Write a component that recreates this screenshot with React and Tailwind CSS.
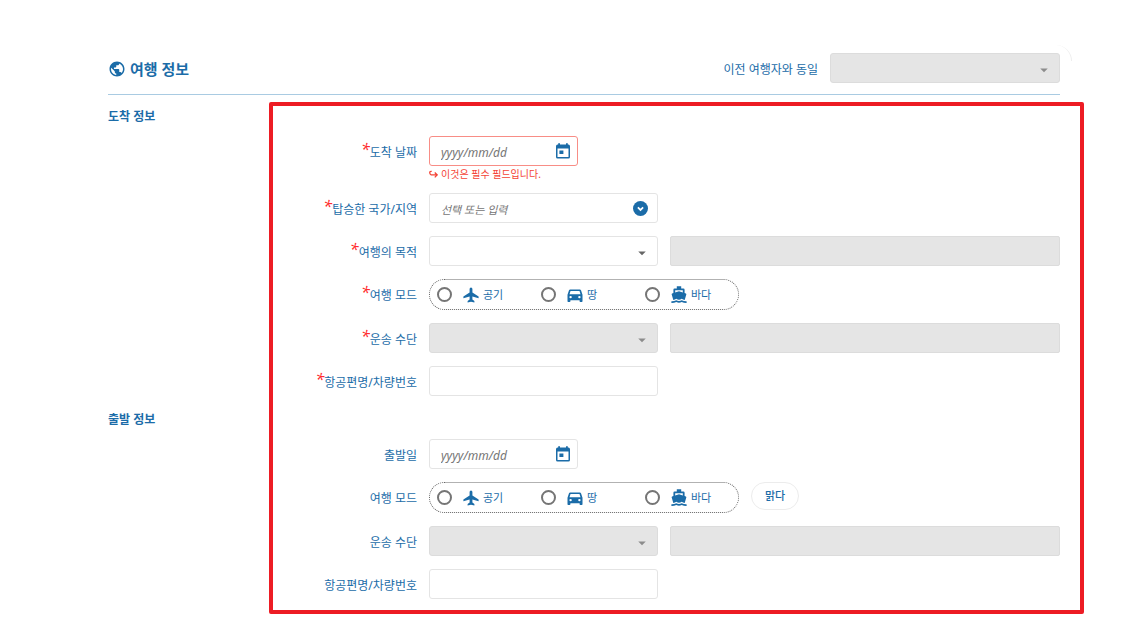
import React from 'react';
import { MdPublic, MdArrowDropDown } from 'react-icons/md';

function PlaneIcon({ className }) {
  return (
    <svg viewBox="0 0 16 16" className={className} fill="currentColor" aria-hidden="true">
      <path d="M8 .4Q9.4.4 9.4 2V5.6L15.6 9.4V11.3L9.4 9.6V12.6L11.4 14.1V15.6L8 14.7L4.6 15.6V14.1L6.6 12.6V9.6L.4 11.3V9.4L6.6 5.6V2Q6.6.4 8 .4Z" />
    </svg>
  );
}

function CarIcon({ className }) {
  return (
    <svg viewBox="0 0 16 16" className={className} fill="currentColor" fillRule="evenodd" aria-hidden="true">
      <path d="M3.2 2.5H12.8Q13.7 2.5 14 3.3L15.5 7.8V14.2Q15.5 15 14.8 15H13.4Q12.6 15 12.6 14.2V13.2H3.4V14.2Q3.4 15 2.6 15H1.2Q.5 15 .5 14.2V7.8L2 3.3Q2.3 2.5 3.2 2.5ZM3.5 4L2.5 7.2H13.5L12.5 4ZM3.6 8.9A1.2 1.2 0 1 0 3.6 11.3A1.2 1.2 0 1 0 3.6 8.9ZM12.4 8.9A1.2 1.2 0 1 0 12.4 11.3A1.2 1.2 0 1 0 12.4 8.9Z" />
    </svg>
  );
}

function BoatIcon({ className }) {
  return (
    <svg viewBox="0 0 16 18" className={className} fill="currentColor" fillRule="evenodd" aria-hidden="true">
      <path d="M5.8 .2H10.2V2.5H12.4Q13.6 2.5 13.6 3.7V7L14.9 7.4Q15.6 7.7 15.3 8.4L13.7 13.9Q12 13.8 10.7 12.7Q8 14.7 5.3 12.7Q4 13.8 2.3 13.9L.7 8.4Q.4 7.7 1.1 7.4L2.4 7V3.7Q2.4 2.5 3.6 2.5H5.8ZM4.2 4.3V6.4L8 5.2L11.8 6.4V4.3Z" />
      <path d="M.4 15.3Q3 15.4 5.3 14.3Q8 15.8 10.7 14.3Q13 15.4 15.6 15.3V17Q13 17.1 10.7 16.1Q8 17.6 5.3 16.1Q3 17.1 .4 17Z" />
    </svg>
  );
}

function CalendarIcon({ className }) {
  return (
    <svg viewBox="0 0 16 16" className={className} fill="currentColor" fillRule="evenodd" aria-hidden="true">
      <path d="M3.2.2H5V1.6H11V.2H12.8V1.6H13.4Q15 1.6 15 3.2V14Q15 15.6 13.4 15.6H2.6Q1 15.6 1 14V3.2Q1 1.6 2.6 1.6H3.2ZM2.5 5.6V14.1H13.5V5.6ZM4.4 7.4H8.4V11H4.4Z" />
    </svg>
  );
}

function Row({ label, htmlFor, required, group, children }) {
  const text = (
    <>
      {required && (
        <span aria-hidden="true" className="mb-2 text-base leading-4 text-[#ff2d2d] italic">*</span>
      )}
      <span>{label}</span>
    </>
  );
  const style = 'flex h-[30px] w-[148px] shrink-0 items-center justify-end pt-[3px] text-xs text-[#1b6ca8]';
  return (
    <div className="flex items-start gap-3">
      {group ? (
        <span id={htmlFor} className={style}>{text}</span>
      ) : (
        <label htmlFor={htmlFor} className={style}>{text}</label>
      )}
      {children}
    </div>
  );
}

function Dropdown({ id, disabled, wide }) {
  return (
    <div className={wide ? 'relative w-[230px]' : 'relative w-[229px] shrink-0'}>
      <select
        id={id}
        disabled={disabled}
        className="block h-[30px] w-full appearance-none rounded-[3px] border border-[#e4e4e4] bg-white px-3 text-xs disabled:border-[#dcdcdc] disabled:bg-[#e5e5e5] disabled:opacity-100"
      />
      <MdArrowDropDown
        className={`pointer-events-none absolute top-2 right-[7px] size-[18px] ${disabled ? 'text-[#8c8c8c]' : 'text-[#666666]'}`}
      />
    </div>
  );
}

function DateField({ id, error }) {
  return (
    <div>
      <div
        className={`flex h-[30px] w-[149px] items-center rounded-[3px] border pr-[6px] pl-[11px] ${error ? 'border-[#f88d86]' : 'border-[#e4e4e4]'}`}
      >
        <input
          id={id}
          placeholder="yyyy/mm/dd"
          className="mt-1 min-w-0 flex-1 text-xs italic outline-none placeholder:text-[#757575]"
        />
        <button type="button" aria-label="달력" className="text-[#1b6ca8]">
          <CalendarIcon className="size-4" />
        </button>
      </div>
      {error && (
        <p className="flex h-[14px] items-center gap-[3px] pt-[3px] text-[10px] text-[#f44336]">
          <svg viewBox="0 0 10 10" className="size-[9px]" fill="none" stroke="currentColor" strokeWidth="1.4">
            <path d="M3 1.5H2.2Q.8 1.5 .8 3T2.5 5.5H9M6.4 2.8L9.1 5.5L6.4 8.2" />
          </svg>
          {error}
        </p>
      )}
    </div>
  );
}

const modes = [
  { value: 'air', text: '공기', Icon: PlaneIcon },
  { value: 'land', text: '땅', Icon: CarIcon },
  { value: 'sea', text: '바다', Icon: BoatIcon },
];

function ModeGroup({ name, labelId }) {
  return (
    <div
      role="radiogroup"
      aria-labelledby={labelId}
      className="flex h-[31px] w-[310px] shrink-0 items-center rounded-full border border-dotted border-[#666666] pl-[7px]"
    >
      {modes.map(({ value, text, Icon }) => (
        <label key={value} className="flex w-[104px] shrink-0 items-center text-[11px] text-[#1b6ca8] last:w-auto">
          <input
            type="radio"
            name={name}
            value={value}
            className="size-[15px] appearance-none rounded-full border-2 border-[#757575] checked:bg-[#1b6ca8]"
          />
          <Icon className="ml-[11px] h-[18px] w-4" />
          <span className="ml-1 pt-[2px]">{text}</span>
        </label>
      ))}
    </div>
  );
}

function DisabledField({ label }) {
  return (
    <input
      disabled
      aria-label={label}
      className="h-[30px] min-w-0 flex-1 rounded-xs border border-[#dcdcdc] bg-[#e5e5e5] px-3 text-xs"
    />
  );
}

function TextField({ id }) {
  return (
    <input id={id} className="h-[30px] w-[229px] rounded-[3px] border border-[#e4e4e4] px-3 text-xs outline-none" />
  );
}

export default function App() {
  return (
    <main className="pt-[53px] pr-[71px] pb-8 pl-[108px] font-['Noto_Sans','Noto_Sans_CJK_KR',sans-serif] text-[#1b6ca8]">
      <header className="relative flex items-center justify-between border-b border-[#a9cbe2] pb-[11px]">
        <h1 className="flex items-center gap-1 pt-[2px] text-[15px] font-bold">
          <MdPublic className="size-[18px]" />
          여행 정보
        </h1>
        <div className="flex items-center gap-3">
          <label htmlFor="previous" className="pt-[3px] text-xs">이전 여행자와 동일</label>
          <Dropdown id="previous" disabled wide />
        </div>
        <div className="absolute -top-2 -right-3 size-4 rounded-tr-full border-r border-[#eeeeee]" />
      </header>

      <form className="relative">
        <section className="flex pt-3">
          <h2 className="w-[161px] shrink-0 text-xs leading-5 font-bold">도착 정보</h2>
          <div className="flex min-w-0 flex-1 flex-col gap-[13px] pt-[29px]">
            <Row label="도착 날짜" htmlFor="arrival-date" required>
              <DateField id="arrival-date" error="이것은 필수 필드입니다." />
            </Row>
            <Row label="탑승한 국가/지역" htmlFor="country" required>
              <div className="flex h-[30px] w-[229px] items-center rounded-[3px] border border-[#e4e4e4] pr-[9px] pl-[11px]">
                <input
                  id="country"
                  placeholder="선택 또는 입력"
                  className="mt-1 min-w-0 flex-1 text-[11px] italic outline-none placeholder:text-[#757575]"
                />
                <button type="button" aria-label="목록 열기">
                  <svg viewBox="0 0 16 16" className="size-[15px]">
                    <circle cx="8" cy="8" r="8" fill="#1b6ca8" />
                    <path d="M5.2 6.8L8 9.5L10.8 6.8" fill="none" stroke="white" strokeWidth="1.9" />
                  </svg>
                </button>
              </div>
            </Row>
            <Row label="여행의 목적" htmlFor="purpose" required>
              <Dropdown id="purpose" />
              <DisabledField label="기타 목적" />
            </Row>
            <Row label="여행 모드" htmlFor="arrival-mode" required group>
              <ModeGroup name="arrival" labelId="arrival-mode" />
            </Row>
            <Row label="운송 수단" htmlFor="arrival-transport" required>
              <Dropdown id="arrival-transport" disabled />
              <DisabledField label="기타 운송 수단" />
            </Row>
            <Row label="항공편명/차량번호" htmlFor="arrival-number" required>
              <TextField id="arrival-number" />
            </Row>
          </div>
        </section>

        <section className="flex pt-[14px]">
          <h2 className="w-[161px] shrink-0 text-xs leading-5 font-bold">출발 정보</h2>
          <div className="flex min-w-0 flex-1 flex-col gap-[13px] pt-[29px]">
            <Row label="출발일" htmlFor="departure-date">
              <DateField id="departure-date" />
            </Row>
            <Row label="여행 모드" htmlFor="departure-mode" group>
              <ModeGroup name="departure" labelId="departure-mode" />
              <button type="button" className="h-7 w-12 rounded-full border border-[#ececec] text-[11px] font-medium">
                맑다
              </button>
            </Row>
            <Row label="운송 수단" htmlFor="departure-transport">
              <Dropdown id="departure-transport" disabled />
              <DisabledField label="기타 출발 운송 수단" />
            </Row>
            <Row label="항공편명/차량번호" htmlFor="departure-number">
              <TextField id="departure-number" />
            </Row>
          </div>
        </section>
        <div className="pointer-events-none absolute top-[7px] -right-6 -bottom-[15px] left-[161px] rounded-xs border-4 border-[#ed1c24]" />
      </form>
    </main>
  );
}
